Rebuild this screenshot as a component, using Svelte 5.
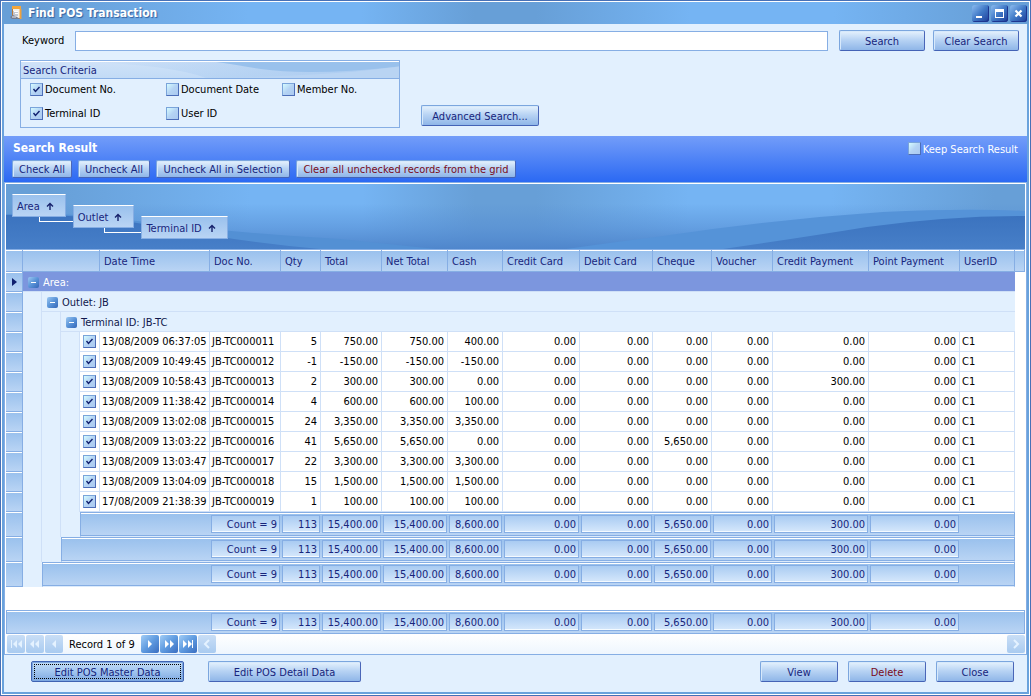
<script>
  const columns = [
    { title: 'Date Time', width: 110 },
    { title: 'Doc No.', width: 71 },
    { title: 'Qty', width: 40 },
    { title: 'Total', width: 61 },
    { title: 'Net Total', width: 66 },
    { title: 'Cash', width: 55 },
    { title: 'Credit Card', width: 77 },
    { title: 'Debit Card', width: 73 },
    { title: 'Cheque', width: 59 },
    { title: 'Voucher', width: 61 },
    { title: 'Credit Payment', width: 96 },
    { title: 'Point Payment', width: 91 },
    { title: 'UserID', width: 55 },
  ];

  const z = '0.00';
  const records = [
    ['13/08/2009 06:37:05', 'JB-TC000011', '5', '750.00', '750.00', '400.00', z, z, z, z, z, z, 'C1'],
    ['13/08/2009 10:49:45', 'JB-TC000012', '-1', '-150.00', '-150.00', '-150.00', z, z, z, z, z, z, 'C1'],
    ['13/08/2009 10:58:43', 'JB-TC000013', '2', '300.00', '300.00', z, z, z, z, z, '300.00', z, 'C1'],
    ['13/08/2009 11:38:42', 'JB-TC000014', '4', '600.00', '600.00', '100.00', z, z, z, z, z, z, 'C1'],
    ['13/08/2009 13:02:08', 'JB-TC000015', '24', '3,350.00', '3,350.00', '3,350.00', z, z, z, z, z, z, 'C1'],
    ['13/08/2009 13:03:22', 'JB-TC000016', '41', '5,650.00', '5,650.00', z, z, z, '5,650.00', z, z, z, 'C1'],
    ['13/08/2009 13:03:47', 'JB-TC000017', '22', '3,300.00', '3,300.00', '3,300.00', z, z, z, z, z, z, 'C1'],
    ['13/08/2009 13:04:09', 'JB-TC000018', '15', '1,500.00', '1,500.00', '1,500.00', z, z, z, z, z, z, 'C1'],
    ['17/08/2009 21:38:39', 'JB-TC000019', '1', '100.00', '100.00', '100.00', z, z, z, z, z, z, 'C1'],
  ];

  const totals = ['Count = 9', '113', '15,400.00', '15,400.00', '8,600.00', z, z, '5,650.00', z, '300.00', z];

  const criteria = [
    { label: 'Document No.', checked: true },
    { label: 'Document Date', checked: false },
    { label: 'Member No.', checked: false },
    { label: 'Terminal ID', checked: true },
    { label: 'User ID', checked: false },
  ];

  const groups = ['Area', 'Outlet', 'Terminal ID'];

  let keyword = $state('');
</script>

{#snippet cols()}
  <colgroup>
    <col style:width="17px" />
    <col style:width="19px" />
    <col style:width="19px" />
    <col style:width="19px" />
    <col style:width="20px" />
    {#each columns as c}<col style:width="{c.width}px" />{/each}
    <col />
  </colgroup>
{/snippet}

{#snippet toggle()}
  <button class="toggle" aria-label="Collapse">
    <svg width="11" height="11" viewBox="0 0 11 11"><path d="M3 5.5h5" stroke="#fff" /></svg>
  </button>
{/snippet}

{#snippet summary()}
  {#each totals as t}
    <td class="band"><div class="sum">{t}</div></td>
  {/each}
{/snippet}

<div class="window">
  <header class="titlebar">
    <svg class="app-icon" width="13" height="14" viewBox="0 0 13 14">
      <path d="M2.5 1.5h8v11h-8z" fill="#f3f1ea" stroke="#b9793a" />
      <path d="M2 0h9v3H2z" fill="#f4a63c" />
      <path d="M9.500 3h2v10h-2z" fill="#f0a23c" />
      <path d="M3 5h5v5H3z" fill="#c3c8d2" />
      <path d="M4 5.500h4M5 7.500h3" stroke="#fff" />
      <path d="M0 11l3-2 4 2 3 2H2z" fill="#757d90" />
      <path d="M2 11h4" stroke="#e8ecf2" />
    </svg>
    <h1>Find POS Transaction</h1>
    <div class="caption-buttons">
      <button aria-label="Minimize"><svg width="17" height="17" viewBox="0 0 17 17"><path d="M4 11h6v2H4z" fill="#fff" /></svg></button>
      <button aria-label="Maximize"><svg width="17" height="17" viewBox="0 0 17 17"><path d="M4 4h9v9H4zM5 7v5h7V7z" fill="#fff" fill-rule="evenodd" /></svg></button>
      <button aria-label="Close window"><svg width="17" height="17" viewBox="0 0 17 17"><path d="M5.500 5.500l6 6M11.500 5.500l-6 6" stroke="#fff" stroke-width="2.200" /></svg></button>
    </div>
  </header>

  <div class="body">
    <section class="search">
      <div class="keyword">
        <label for="keyword">Keyword</label>
        <input id="keyword" type="text" bind:value={keyword} />
        <button class="btn">Search</button>
        <button class="btn">Clear Search</button>
      </div>
      <div class="options">
        <div class="criteria">
          <h2>Search Criteria
            <svg viewBox="0 0 378 18" preserveAspectRatio="none" aria-hidden="true">
              <defs>
                <linearGradient id="fade" x1="0" y1="0" x2="1" y2="0">
                  <stop offset="0" stop-color="#a9caf0" stop-opacity="0" />
                  <stop offset="1" stop-color="#a9caf0" />
                </linearGradient>
              </defs>
              <path d="M60 0H378V18H185Q150 3 60 0Z" fill="url(#fade)" />
              <path d="M195 0H378V5Q290 16 240 8Q215 3 195 0Z" fill="#99c1ec" />
              <path d="M185 18Q310 16 378 5V18Z" fill="#b9d4f3" />
            </svg>
          </h2>
          <div class="checks">
            {#each criteria as c}
              <label><input type="checkbox" checked={c.checked} /><span>{c.label}</span></label>
            {/each}
          </div>
        </div>
        <button class="btn advanced">Advanced Search...</button>
      </div>
    </section>

    <section class="result">
      <div class="result-top">
        <h2>Search Result</h2>
        <label><input type="checkbox" /><span>Keep Search Result</span></label>
      </div>
      <div class="result-actions">
        <button class="btn w60">Check All</button>
        <button class="btn w72">Uncheck All</button>
        <button class="btn w134">Uncheck All in Selection</button>
        <button class="btn w220 danger">Clear all unchecked records from the grid</button>
      </div>
    </section>

    <section class="grid">
      <div class="group-panel">
        <svg class="waves" viewBox="0 0 1019 65" preserveAspectRatio="none" aria-hidden="true">
          <defs>
            <linearGradient id="haze" x1="0" y1="0" x2="0" y2="1">
              <stop offset="0.3" stop-color="#548cd2" stop-opacity="0" />
              <stop offset="0.65" stop-color="#548cd2" stop-opacity=".5" />
              <stop offset="1" stop-color="#4f86cc" stop-opacity="1" />
            </linearGradient>
            <linearGradient id="deep" x1="0" y1="0" x2="0" y2="1">
              <stop offset="0" stop-color="#3b73bf" />
              <stop offset="1" stop-color="#477fc8" />
            </linearGradient>
          </defs>
          <rect width="1019" height="65" fill="url(#haze)" />
          <path d="M0 30Q70 28 131 37Q240 50 334 55L430 65H0Z" fill="#5390d4" />
          <path d="M0 31Q80 29 150 42Q235 58 314 65H0Z" fill="url(#deep)" />
          <path d="M560 65Q610 58 650 53Q760 36 877 28Q960 24 1019 27V65Z" fill="#5593d8" />
          <path d="M717 65Q800 53 861 43Q940 32 1019 32V65Z" fill="url(#deep)" />
        </svg>
        {#each groups as g, i}
          <button class="chip" style:margin-top="{i * 11}px">
            {g}
            <svg width="8" height="8" viewBox="0 0 8 8"><path d="M4 8V1.500M1 4.500L4 1.500L7 4.500" fill="none" stroke="#16226c" stroke-width="1.400" /></svg>
          </button>
        {/each}
      </div>

      <table>
        {@render cols()}
        <thead>
          <tr>
            <th></th>
            <th colspan="4"></th>
            {#each columns as c}<th scope="col">{c.title}</th>{/each}
            <th></th>
          </tr>
        </thead>
        <tbody>
          <tr>
            <td class="ind"><svg width="5" height="8" viewBox="0 0 5 8"><path d="M0 0L5 4L0 8Z" fill="#10206e" /></svg></td>
            <td class="group active" colspan="17"><div>{@render toggle()}Area:</div></td>
            <td></td>
          </tr>
          <tr>
            <td class="ind"></td>
            <td class="indent"></td>
            <td class="group" colspan="16"><div>{@render toggle()}Outlet: JB</div></td>
            <td></td>
          </tr>
          <tr>
            <td class="ind"></td>
            <td class="indent"></td>
            <td class="indent"></td>
            <td class="group" colspan="15"><div>{@render toggle()}Terminal ID: JB-TC</div></td>
            <td></td>
          </tr>
          {#each records as r}
            <tr>
              <td class="ind"></td>
              <td class="indent"></td>
              <td class="indent"></td>
              <td class="indent"></td>
              <td class="cell pick"><input type="checkbox" checked aria-label={r[1]} /></td>
              {#each r as v, i}
                <td class="cell" class:num={i > 1 && i < 12}>{v}</td>
              {/each}
              <td></td>
            </tr>
          {/each}
          {#each [3, 2, 1] as depth}
            <tr class="foot">
              <td class="ind"></td>
              {#each Array(depth) as _, i}<td class="indent" class:last={i === depth - 1}></td>{/each}
              <td class="band first" colspan={5 - depth}></td>
              {@render summary()}
              <td class="band end"></td>
              <td></td>
            </tr>
          {/each}
        </tbody>
      </table>

      <div class="blank"></div>

      <table class="grand">
        {@render cols()}
        <tbody>
          <tr class="foot">
            <td class="band first" colspan="6"></td>
            {@render summary()}
            <td class="band end" colspan="2"></td>
          </tr>
        </tbody>
      </table>

      <nav class="pager">
        <button disabled aria-label="First record"><svg viewBox="0 0 18 18"><path d="M4 5h1v8H4zM10 5v8L6 9zM15 5v8l-4-4z" /></svg></button>
        <button disabled aria-label="Previous page"><svg viewBox="0 0 18 18"><path d="M8 5v8L4 9zM13 5v8L9 9z" /></svg></button>
        <button disabled aria-label="Previous record"><svg viewBox="0 0 18 18"><path d="M11 5v8L7 9z" /></svg></button>
        <span>Record 1 of 9</span>
        <button aria-label="Next record"><svg viewBox="0 0 18 18"><path d="M7 5v8l4-4z" /></svg></button>
        <button aria-label="Next page"><svg viewBox="0 0 18 18"><path d="M5 5v8l4-4zM10 5v8l4-4z" /></svg></button>
        <button aria-label="Last record"><svg viewBox="0 0 18 18"><path d="M4 5v8l4-4zM9 5v8l4-4zM13 5h1v8h-1z" /></svg></button>
        <button disabled aria-label="Scroll left"><svg viewBox="0 0 18 18"><path d="M11 5L7 9l4 4" fill="none" stroke="#e4f2ff" stroke-width="2" /></svg></button>
        <button class="scroll-end" disabled aria-label="Scroll right"><svg viewBox="0 0 18 18"><path d="M7 5l4 4-4 4" fill="none" stroke="#e4f2ff" stroke-width="2" /></svg></button>
      </nav>
    </section>

    <footer class="actions">
      <button class="btn wide focused">Edit POS Master Data</button>
      <button class="btn wide">Edit POS Detail Data</button>
      <span class="grow"></span>
      <button class="btn">View</button>
      <button class="btn danger">Delete</button>
      <button class="btn">Close</button>
    </footer>
  </div>
</div>

<style>
  :global(body) {
    margin: 0;
  }

  .window,
  .window * {
    box-sizing: border-box;
  }

  .window {
    --ink: #17257c;
    --line: #86aee4;
    --pale: #e2f0fe;
    --steel: #679fd7;
    --sky: #75b4f3;
    --sheen: linear-gradient(90deg, var(--steel) 0%, var(--steel) 4%, var(--sky) 24%, var(--sky) 35%, var(--steel) 46%, var(--steel) 52%, var(--sky) 67%, var(--sky) 81%, var(--steel) 97%, var(--steel) 100%);
    --bar: linear-gradient(#9ac1ed, #b9d4f4);
    display: flex;
    flex-direction: column;
    min-height: 100vh;
    padding: 1px;
    border: 1px solid #4770b6;
    background: #fff;
    color: #000;
    font: 11px/13px 'DejaVu Sans Condensed', 'Noto Sans', sans-serif;
  }

  button,
  input {
    margin: 0;
    padding: 0;
    font: inherit;
  }

  h1,
  h2 {
    margin: 0;
  }

  /* Title bar */
  .titlebar {
    display: flex;
    align-items: center;
    height: 22px;
    padding: 0 2px 0 8px;
    background: var(--sheen);
  }

  .titlebar h1 {
    flex: 1;
    margin-left: 5px;
    color: #fff;
    font-size: 12px;
    line-height: 16px;
    text-shadow: 1px 1px 1px #33609f;
  }

  .caption-buttons {
    display: flex;
    gap: 2px;
  }

  .caption-buttons button {
    width: 17px;
    height: 17px;
    border: 0;
    border-radius: 3px;
    background: linear-gradient(135deg, #8cbcf0, #3f78c6 50%, #1c3c98);
    box-shadow: inset -1px -1px #1d3590;
  }

  .caption-buttons svg {
    display: block;
  }

  .body {
    display: flex;
    flex: 1;
    flex-direction: column;
    border: solid #69a2dc;
    border-width: 0 2px 2px;
    background: var(--pale);
  }

  /* Buttons */
  .btn {
    padding-top: 1px;
    border: 1px solid;
    border-color: #7ba6de #4a66b8 #4463b6 #7ba6de;
    border-radius: 2px;
    background: linear-gradient(#e6f2fd, #b9d4f4 45%, #8fb6e8);
    box-shadow: inset 1px 1px #d7e9fb;
    color: var(--ink);
    text-align: center;
    white-space: nowrap;
  }

  .btn.danger {
    color: #7a0c1a;
  }

  input[type='checkbox'] {
    width: 13px;
    height: 13px;
    appearance: none;
    border: 1px solid;
    border-color: #7aa4da #4c6db8 #4c6db8 #7aa4da;
    background: linear-gradient(135deg, #d5fbff, #b4d3f4 50%, #aac9f0);
  }

  input[type='checkbox']:checked {
    background:
      url("data:image/svg+xml,%3Csvg xmlns='http://www.w3.org/2000/svg' viewBox='0 0 11 11'%3E%3Cpath d='M2.5 5l2 2.5 4-4.5' fill='none' stroke='%2310206e' stroke-width='1.4'/%3E%3C/svg%3E") center / 11px 11px no-repeat,
      linear-gradient(135deg, #d5fbff, #b4d3f4 50%, #aac9f0);
  }

  label {
    display: flex;
    align-items: center;
    gap: 2px;
  }

  label span {
    padding-top: 1px;
  }

  /* Search form */
  .search {
    height: 112px;
    padding: 6px 8px 0 16px;
  }

  .keyword {
    display: flex;
    align-items: center;
    gap: 8px;
  }

  .keyword label {
    width: 45px;
    margin-left: 2px;
  }

  .keyword input {
    flex: 1;
    height: 20px;
    margin-right: 3px;
    padding: 0 4px;
    border: 1px solid var(--line);
    background: #fff;
    outline: 0;
  }

  .keyword .btn {
    width: 86px;
    height: 21px;
  }

  .options {
    display: flex;
    align-items: flex-start;
    gap: 21px;
    margin-top: 9px;
  }

  .criteria {
    width: 380px;
    height: 68px;
    border: 1px solid var(--line);
  }

  .criteria h2 {
    position: relative;
    isolation: isolate;
    height: 18px;
    padding-left: 2px;
    border-top: 1px solid #fff;
    border-bottom: 1px solid var(--line);
    background: linear-gradient(#cfe2f8, #c2dbf6);
    color: var(--ink);
    font-size: 11px;
    font-weight: normal;
    line-height: 17px;
  }

  .criteria h2 svg {
    position: absolute;
    inset: 0;
    z-index: -1;
    width: 100%;
    height: 100%;
  }

  .checks {
    display: grid;
    grid-template-columns: 136px 116px auto;
    gap: 10px 0;
    padding: 3px 0 0 9px;
  }

  .btn.advanced {
    width: 118px;
    height: 21px;
    margin-top: 45px;
  }

  /* Result heading */
  .result {
    height: 46px;
    padding: 5px 9px 0 8px;
    background: linear-gradient(#739df9, #2b69f3);
  }

  .result-top {
    display: flex;
    align-items: center;
    justify-content: space-between;
    height: 15px;
    color: #fff;
  }

  .result-top h2 {
    padding-left: 1px;
    font-size: 12px;
  }

  .result-actions {
    display: flex;
    gap: 6px;
    margin-top: 4px;
  }

  .result-actions .btn {
    height: 18px;
  }

  .w60 {
    width: 60px;
  }

  .w72 {
    width: 72px;
  }

  .w134 {
    width: 134px;
  }

  .w220 {
    width: 220px;
  }

  /* Grid */
  .grid {
    display: flex;
    flex: 1;
    flex-direction: column;
    padding: 1px 1px 0;
    border: 1px solid var(--line);
    background: #fff;
  }

  .group-panel {
    position: relative;
    isolation: isolate;
    display: flex;
    align-items: flex-start;
    gap: 7px;
    height: 65px;
    padding: 10px 6px;
    background: var(--sheen);
  }

  .waves {
    position: absolute;
    inset: 0;
    z-index: -1;
    width: 100%;
    height: 100%;
  }

  .chip {
    position: relative;
    display: flex;
    align-items: center;
    gap: 6px;
    height: 23px;
    padding: 1px 11px 0 4px;
    border: 1px solid var(--line);
    border-top-color: #fff;
    background: var(--bar);
    color: var(--ink);
    white-space: nowrap;
  }

  .chip:not(:last-child)::after {
    content: '';
    position: absolute;
    top: 22px;
    left: 50%;
    right: -8px;
    height: 4px;
    border: solid #fff;
    border-width: 0 0 1px 1px;
  }

  table {
    width: 100%;
    table-layout: fixed;
    border-spacing: 0;
  }

  th,
  td {
    height: 20px;
    padding: 0;
    overflow: hidden;
    white-space: nowrap;
  }

  th {
    height: 23px;
    padding: 2px 0 0 4px;
    border: solid var(--line);
    border-width: 1px 1px 1px 0;
    background: linear-gradient(#fff 1px, #9ac1ed 1px, #b9d4f4);
    color: var(--ink);
    font-weight: normal;
    text-align: left;
  }

  .ind {
    border: solid var(--line);
    border-width: 0 1px 1px 0;
    background: linear-gradient(#fff 1px, #9ac1ed 1px, #b9d4f4);
    text-align: center;
  }

  .ind svg {
    display: block;
    margin: auto;
  }

  .indent {
    border-right: 1px solid #cfe0f7;
    background: var(--pale);
  }

  .indent.last {
    border-right: 0;
  }

  .group {
    border-bottom: 1px solid #cfe0f7;
    background: var(--pale);
    color: #10184c;
  }

  .group div {
    display: flex;
    align-items: center;
    gap: 4px;
    padding: 1px 0 0 5px;
  }

  .group.active {
    background: #7c96de;
    color: #fff;
  }

  .toggle {
    width: 11px;
    height: 11px;
    border: 0;
    border-radius: 2px;
    background: linear-gradient(135deg, #9cc8f2, #5a94d8 50%, #3567b8);
  }

  .toggle svg {
    display: block;
  }

  .cell {
    padding: 0 2px;
    border: solid #cfe0f7;
    border-width: 0 1px 1px 0;
    background: #fff;
  }

  .num {
    padding-right: 3px;
    text-align: right;
  }

  .pick input {
    display: block;
    margin: auto;
  }

  .foot td {
    height: 25px;
  }

  .foot .band {
    padding: 0 1px;
    border-bottom: 1px solid #dcebfc;
    background: linear-gradient(var(--line) 1px, #fff 1px, #fff 2px, #9ac1ed 2px, #b9d4f4 calc(100% - 1px), var(--line) calc(100% - 1px));
    background-clip: padding-box;
  }

  .foot .first {
    border-left: 1px solid var(--line);
  }

  .foot .end {
    border-right: 1px solid var(--line);
  }

  .grand .foot td {
    height: 24px;
    border-bottom: 0;
  }

  .sum {
    height: 18px;
    padding: 1px 2px 0 0;
    border: 1px solid var(--line);
    background: linear-gradient(#a9cbf2, #d3e6fb 15px, #f4faff 15px);
    color: var(--ink);
    line-height: 16px;
    text-align: right;
  }

  .blank {
    flex: 1;
  }

  .pager {
    display: flex;
    align-items: center;
    gap: 1px;
    height: 20px;
    padding-left: 1px;
    background: linear-gradient(#fff, #eef6fe);
  }

  .pager button {
    flex: none;
    width: 18px;
    height: 18px;
    border: 0;
    border-radius: 2px;
    background: linear-gradient(135deg, #a2cdf6, #5f9be0 50%, #3a6dc0);
  }

  .pager button:disabled {
    background: linear-gradient(#c9def6, #a9cbf0);
  }

  .pager button:disabled svg {
    fill: #e4f2ff;
  }

  .pager svg {
    display: block;
    fill: #fff;
  }

  .pager span {
    padding: 0 5px;
  }

  .pager .scroll-end {
    margin-left: auto;
  }

  /* Bottom actions */
  .actions {
    display: flex;
    align-items: center;
    gap: 10px;
    height: 37px;
    padding: 0 13px 4px 27px;
  }

  .actions .btn {
    width: 78px;
    height: 21px;
  }

  .actions .wide {
    width: 153px;
    margin-right: 14px;
  }

  .actions .focused {
    border-color: #3f63b2;
    background: linear-gradient(#c3dcf6, #a5c8f0 45%, #7fa9e2);
    box-shadow: inset 0 0 0 1px #7ea8e0;
    outline: 1px dotted #000;
    outline-offset: -4px;
  }

  .grow {
    flex: 1;
  }
</style>
